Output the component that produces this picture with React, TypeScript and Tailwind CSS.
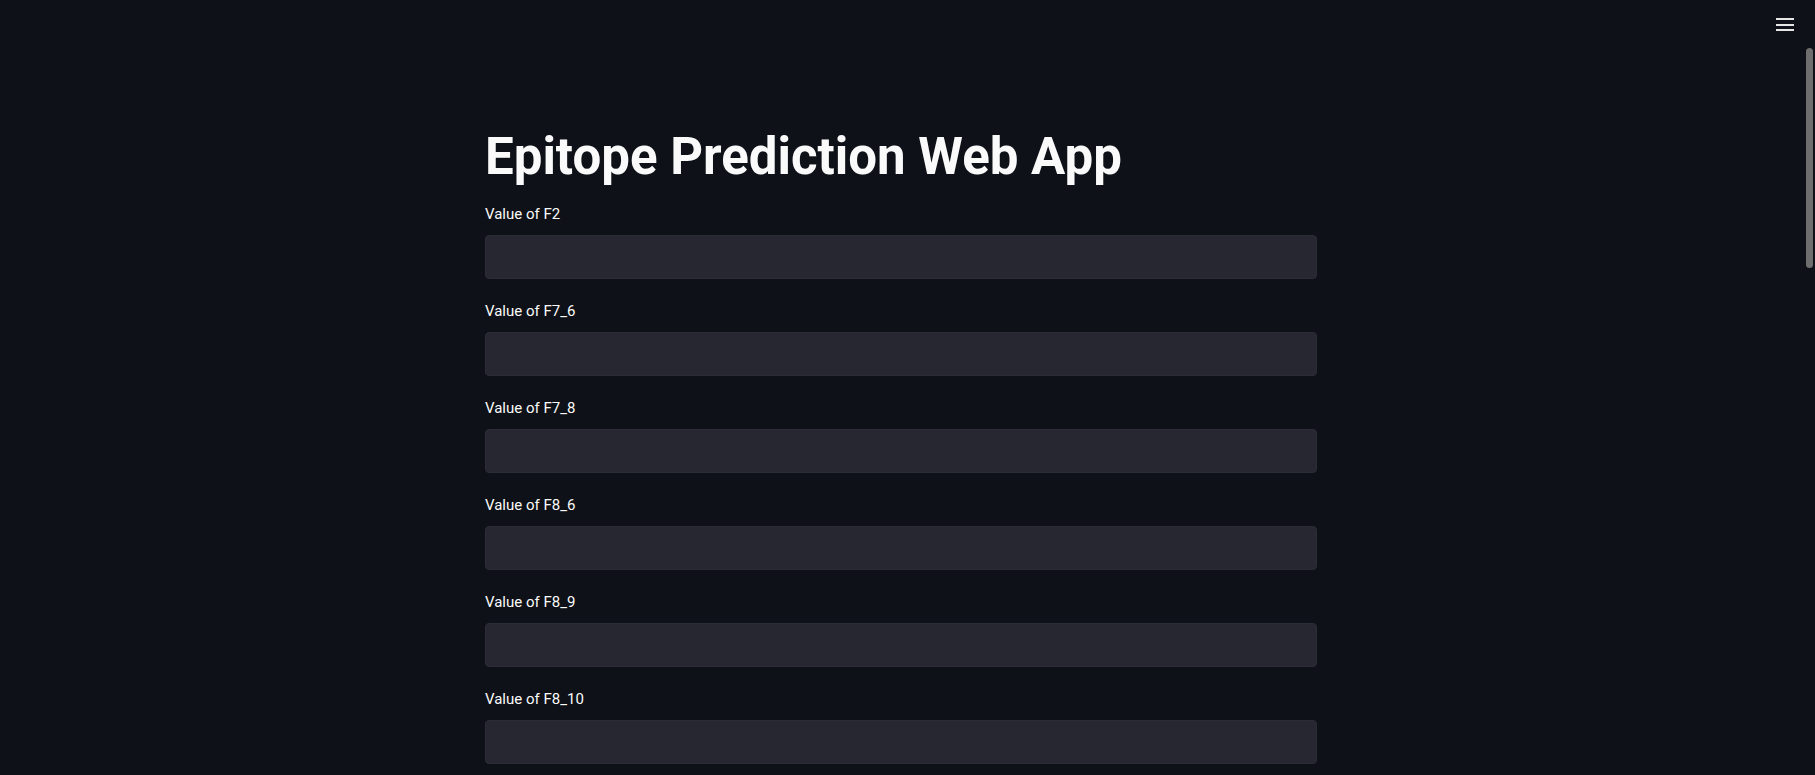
const fields = ["F2", "F7_6", "F7_8", "F8_6", "F8_9", "F8_10"];

const fontStack = { fontFamily: '"Source Sans Pro", Roboto, "Noto Sans", sans-serif' };

export default function App() {
  return (
    <div
      className="relative h-[775px] w-full overflow-hidden bg-[#0e1117] text-[#fafafa]"
      style={fontStack}
    >
      {/* menu button */}
      <button className="absolute right-[21px] top-[18px] flex h-[13px] w-[18px] flex-col justify-between">
        <span className="h-[2px] w-full bg-[#e6e6e6]" />
        <span className="h-[2px] w-full bg-[#e6e6e6]" />
        <span className="h-[2px] w-full bg-[#e6e6e6]" />
      </button>

      {/* scrollbar thumb */}
      <div className="absolute right-[2px] top-[48px] h-[220px] w-[7px] rounded-full bg-[#6e6e6e]" />

      <main className="ml-[485px] w-[832px] pt-[126px]">
        <h1 className="text-[51px] font-bold leading-[1.2] text-[#fafafa]">
          Epitope Prediction Web App
        </h1>

        <div className="mt-[14px] flex flex-col gap-[19px]">
          {fields.map((f) => (
            <div key={f}>
              <label className="block text-[15px] leading-[26px] text-[#fafafa]">
                Value of {f}
              </label>
              <input
                type="text"
                className="mt-[8px] block h-[44px] w-full rounded-[4px] border border-[#2b2c36] bg-[#262730] px-3 text-[15px] text-[#fafafa] outline-none"
              />
            </div>
          ))}
        </div>
      </main>
    </div>
  );
}
